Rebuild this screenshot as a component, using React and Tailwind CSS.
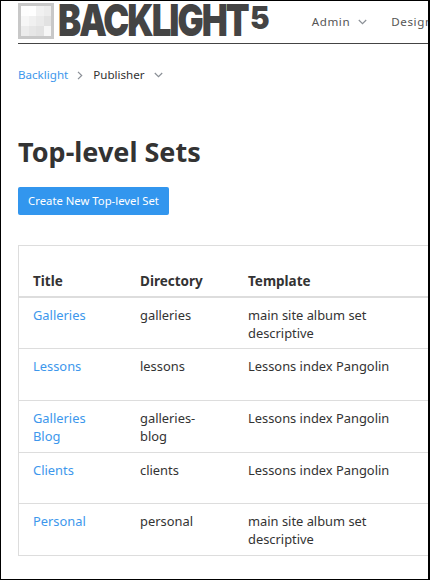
const rows = [
  { title: "Galleries", dir: "galleries", template: "main site album set descriptive" },
  { title: "Lessons", dir: "lessons", template: "Lessons index Pangolin" },
  { title: "Galleries Blog", dir: "galleries-blog", template: "Lessons index Pangolin" },
  { title: "Clients", dir: "clients", template: "Lessons index Pangolin" },
  { title: "Personal", dir: "personal", template: "main site album set descriptive" },
];

const swatches = [
  "#fdfdfd", "#fefefe", "#f1f1f1", "#ececec",
  "#f6f6f6", "#f0f0f0", "#eaeaea", "#e2e2e2",
  "#ececec", "#e6e6e6", "#e2e2e2", "#f6f6f6",
];

function Chevron({ className }) {
  return (
    <svg width="9" height="6" viewBox="0 0 9 6" fill="none" className={className}>
      <path d="M0.8 1 L4.5 4.7 L8.2 1" stroke="#8a8f96" strokeWidth="1.2" />
    </svg>
  );
}

export default function App() {
  return (
    <div className="w-[430px] h-[580px] overflow-hidden bg-white border border-black border-r-2 font-['Noto_Sans',sans-serif] text-[#333] text-[12.88px]">
      <div className="ml-[17px] h-[43px] border-b border-[#444] flex items-start pt-[2px] whitespace-nowrap">
        {/* Logo */}
        <div className="w-[36px] h-[36px] shrink-0 border-[3px] border-[#c8c8c8] grid grid-cols-4">
          {swatches.map((c, i) => (
            <div key={i} style={{ backgroundColor: c }} />
          ))}
        </div>
        <div className="ml-[4px] w-[192px] h-[34px] shrink-0">
          <span className="inline-block font-['Inter',sans-serif] font-black text-[44px] leading-[34px] text-[#444] tracking-[-2.5px] origin-left scale-x-[0.79]">
            BACKLIGHT
          </span>
        </div>
        <span className="shrink-0 font-['Inter',sans-serif] font-black text-[31px] leading-[30px] text-[#444] origin-left scale-x-[0.95]">
          5
        </span>
        <nav className="ml-[41px] mt-[10px] flex items-center text-[11.6px] leading-[18px] tracking-[0.6px] text-[#555]">
          <span>Admin</span>
          <Chevron className="ml-[8px]" />
          <span className="ml-[24px]">Design</span>
        </nav>
      </div>

      <div className="pl-[17px]">
        {/* Breadcrumb */}
        <div className="mt-[22px] flex items-center text-[11.6px] leading-[18px] whitespace-nowrap">
          <span className="text-[#3d97ec]">Backlight</span>
          <svg width="6" height="9" viewBox="0 0 6 9" fill="none" className="ml-[9px]">
            <path d="M1 0.8 L4.7 4.5 L1 8.2" stroke="#8a8f96" strokeWidth="1.2" />
          </svg>
          <span className="ml-[10px]">Publisher</span>
          <Chevron className="ml-[9px]" />
        </div>

        <h1 className="mt-[50px] text-[27px] leading-[36px] font-bold text-[#333]">Top-level Sets</h1>

        <button className="mt-[17px] block w-[151px] h-[28px] bg-[#3296ee] rounded-[2px] text-white text-[11.3px] leading-[28px] text-center whitespace-nowrap">
          Create New Top-level Set
        </button>

        {/* Table runs off the right edge of the window */}
        <div className="mt-[30px] w-[460px] border border-[#ddd]">
          <table className="w-full table-fixed border-collapse text-left">
            <thead>
              <tr className="border-b-2 border-[#ddd]">
                <th className="w-[121px] pl-[14px] pt-[26px] pb-[6px] text-[13.5px] leading-[18px] font-bold">Title</th>
                <th className="w-[108px] pl-0 pt-[26px] pb-[6px] text-[13.5px] leading-[18px] font-bold">Directory</th>
                <th className="pt-[26px] pb-[6px] text-[13.5px] leading-[18px] font-bold">Template</th>
              </tr>
            </thead>
            <tbody>
              {rows.map((row, i) => (
                <tr key={row.dir} className={i < rows.length - 1 ? "border-b border-[#ddd]" : ""}>
                  <td className="h-[51.6px] pl-[14px] pr-[30px] pt-[8px] pb-[6px] align-top leading-[18.2px] text-[#3d97ec]">{row.title}</td>
                  <td className="pr-[30px] pt-[8px] pb-[6px] align-top leading-[18.2px]">{row.dir}</td>
                  <td className="pr-[80px] pt-[8px] pb-[6px] align-top leading-[18.2px]">{row.template}</td>
                </tr>
              ))}
            </tbody>
          </table>
        </div>
      </div>
    </div>
  );
}
